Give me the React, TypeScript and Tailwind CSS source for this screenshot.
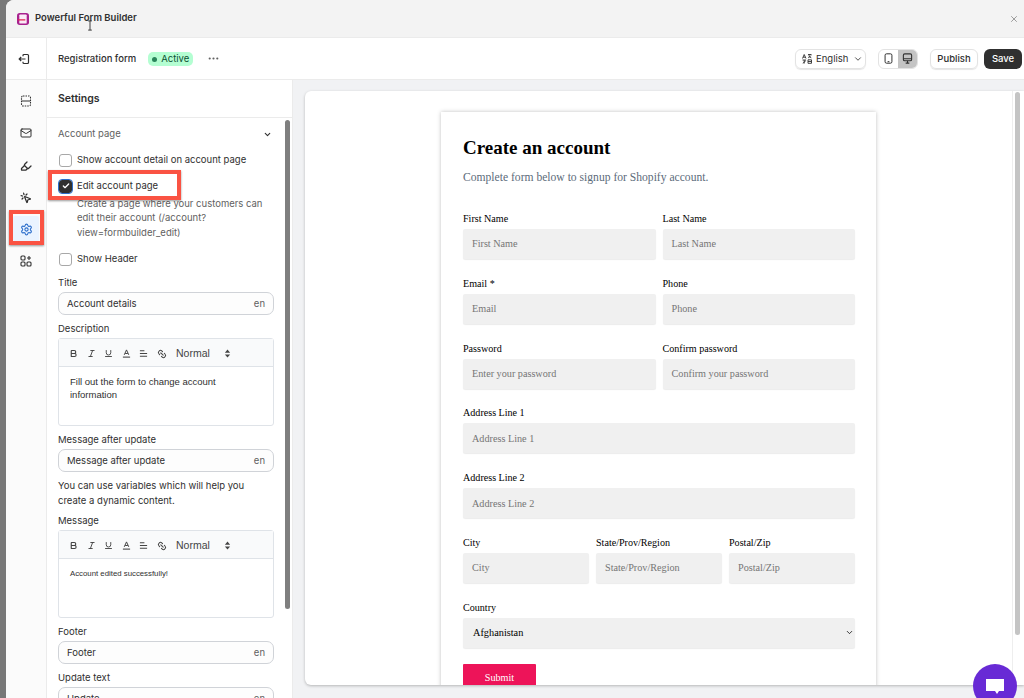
import React from 'react';
import { ChevronDown, Check, X, Settings, Ellipsis, Bold, Italic, Underline, Link2, Mail, Highlighter, MousePointerClick } from 'lucide-react';

function Checkbox({ checked, label }: { checked?: boolean; label: string }) {
  return (
    <label className="flex items-center gap-[5px] h-[26px] pt-[2px] pl-[1px] text-[9.5px] text-[#303030]">
      {checked ? (
        <span className="w-[13px] h-[13px] rounded-[3px] bg-[#303030] flex items-center justify-center outline outline-[1.5px] outline-[#2c6ecb]">
          <Check className="w-[8px] h-[8px] text-white" strokeWidth={4} />
        </span>
      ) : (
        <span className="w-[13px] h-[13px] rounded-[3px] border border-[#a8a8a8] bg-white" />
      )}
      <span>{label}</span>
    </label>
  );
}

function Label({ children }: { children: React.ReactNode }) {
  return <div className="h-[14px] pt-[1px] text-[9.5px] leading-[14px] text-[#303030] mb-[3px]">{children}</div>;
}

function TextField({ label, value }: { label: string; value: string }) {
  return (
    <div>
      <Label>{label}</Label>
      <div className="h-[23px] rounded-[7px] border border-[#d0d3d8] bg-[#fdfdfd] flex items-center justify-between pt-[1px] px-[8px] text-[9.5px] text-[#303030]">
        <span>{value}</span>
        <span className="text-[#616161]">en</span>
      </div>
    </div>
  );
}

function Editor({ children }: { children: React.ReactNode }) {
  return (
    <div className="h-[88px] rounded-[3px] border border-[#dfe3e8] flex flex-col">
      <div className="h-[28px] pt-[2px] bg-[#f9fafb] border-b border-[#dfe3e8] flex items-center pl-[10px] text-[#444444] gap-[8.5px]">
        <Bold className="w-[9px] h-[9px]" strokeWidth={3} />
        <Italic className="w-[9px] h-[9px]" strokeWidth={2.5} />
        <Underline className="w-[9px] h-[9px]" strokeWidth={2.5} />
        <svg viewBox="0 0 10 10" className="w-[9px] h-[9px]"><path d="M2.5 6.5l2.5-5.5 2.5 5.5M3.5 5h3" fill="none" stroke="currentColor" strokeWidth="1.1" /><path d="M1 9h8" stroke="currentColor" strokeWidth="1.2" /></svg>
        <svg viewBox="0 0 10 10" className="w-[9px] h-[9px]"><path d="M1 2h5M1 5h8M1 8h8" stroke="currentColor" strokeWidth="1.2" /></svg>
        <Link2 className="w-[10px] h-[10px] rotate-45" strokeWidth={2.5} />
        <span className="ml-[1px] w-[39px] text-[10.5px] font-['Liberation_Sans',sans-serif]">Normal</span>
        <svg viewBox="0 0 8 10" className="w-[7px] h-[9px]" fill="currentColor"><path d="M4 0.5L7 4H1zM4 9.5L1 6h6z" /></svg>
      </div>
      <div className="px-[11px] py-[8px] font-['Liberation_Sans',sans-serif] text-[#303030]">{children}</div>
    </div>
  );
}

function Field({ label, placeholder }: { label: string; placeholder: string }) {
  return (
    <div className="flex-1">
      <div className="text-[10.1px] leading-[12px] text-black mb-[4px]">{label}</div>
      <div className="h-[30px] rounded-[2px] bg-[#f0f0f0] shadow-[0_1px_1px_rgba(0,0,0,0.08)] flex items-center px-[9px] text-[10.2px] text-[#757575]">{placeholder}</div>
    </div>
  );
}

export default function App() {
  return (
    <div className="relative w-[1024px] h-[698px] overflow-hidden bg-[#787878] font-['Inter',sans-serif]">
      <div className="ml-[6px] h-full rounded-tl-[8px] overflow-hidden bg-white flex flex-col">
        {/* title bar */}
        <div className="h-[38px] shrink-0 bg-[#f3f3f3] border-b border-[#ebebeb] flex items-center pl-[11px] pr-[5px]">
          <svg viewBox="0 0 13 13" className="w-[12px] h-[12px]">
            <rect width="13" height="13" rx="3" fill="#a8218e" />
            <rect x="2.5" y="1.5" width="8" height="10" rx="1" fill="#fbeaf6" />
            <path d="M1 7.5h8" stroke="#e0204f" strokeWidth="1.4" />
          </svg>
          <span className="ml-[6px] text-[9.5px] font-semibold text-[#303030]">Powerful Form Builder</span>
          <X className="ml-auto w-[10px] h-[10px] text-[#8a8a8a]" strokeWidth={2} />
        </div>

        {/* toolbar */}
        <div className="h-[42px] shrink-0 bg-white border-b border-[#ebebeb] flex items-center">
          <div className="w-[41px] h-full border-r border-[#ebebeb] flex items-center justify-center pr-[4px]">
            <svg viewBox="0 0 12 12" className="w-[12px] h-[12px] text-[#303030]" fill="none" stroke="currentColor" strokeWidth="1.2">
              <path d="M5 3.2V2.5a1 1 0 0 1 1-1h3.5a1 1 0 0 1 1 1v7a1 1 0 0 1-1 1H6a1 1 0 0 1-1-1v-.7" />
              <path d="M7.5 6H1.2M3.2 4L1.2 6l2 2" />
            </svg>
          </div>
          <span className="ml-[11px] pt-[2px] text-[9.5px] font-medium text-[#303030]">Registration form</span>
          <span className="ml-[12px] h-[14px] pt-[1px] px-[4px] rounded-[5px] bg-[#b4fed2] flex items-center gap-[4px] text-[9.5px] text-[#0c5132]">
            <span className="w-[5px] h-[5px] rounded-full bg-[#29845a]" />
            Active
          </span>
          <Ellipsis className="ml-[14px] w-[13px] h-[13px] text-[#616161]" />
          <div className="ml-auto flex items-center pr-[2px]">
            <div className="w-[71px] h-[20px] pt-[1px] rounded-[6px] border border-[#e3e3e3] flex items-center pl-[6px] gap-[4px] text-[9.5px] text-[#303030] shadow-[0_1px_1px_rgba(0,0,0,0.1)]">
              <svg viewBox="0 0 10 10" className="w-[10px] h-[10px]" fill="none" stroke="currentColor" strokeWidth="0.9">
                <path d="M0.5 4.5L2.2 0.5 4 4.5M1.1 3.2h2.2M6 0.5h3.5M7.7 0.5v1.2M6.2 3.8C7.5 3.2 8.5 2.4 9 1.6M9.3 3.8C8 3.3 7 2.5 6.5 1.6M0.5 6h3.5M2.2 6v3.5M0.8 9.2C2 8.6 3 7.8 3.6 6.6M6 5.8h3.5v3.5H6zM6 7.5h3.5" />
              </svg>
              English
              <ChevronDown className="w-[10px] h-[10px] ml-[1px]" />
            </div>
            <div className="ml-[12px] w-[40px] h-[20px] rounded-[6px] border border-[#e3e3e3] overflow-hidden flex">
              <span className="flex-1 flex items-center justify-center">
                <svg viewBox="0 0 10 12" className="w-[9px] h-[11px] text-[#303030]" fill="none" stroke="currentColor" strokeWidth="1.1"><rect x="1.2" y="0.8" width="7.6" height="10.4" rx="1.6" /><path d="M4 9.5h2" /></svg>
              </span>
              <span className="flex-1 bg-[#c4c4c4] flex items-center justify-center">
                <svg viewBox="0 0 12 12" className="w-[11px] h-[11px] text-[#303030]" fill="none" stroke="currentColor" strokeWidth="1.2"><rect x="1.5" y="1" width="9" height="7.5" rx="1.5" /><path d="M1.5 6.2h9M4 11h4M6 8.5V11" /></svg>
              </span>
            </div>
            <div className="ml-[12px] w-[48px] h-[20px] pt-[2px] rounded-[6px] border border-[#e3e3e3] flex items-center justify-center text-[9.5px] font-medium text-[#303030] shadow-[0_1px_1px_rgba(0,0,0,0.1)]">Publish</div>
            <div className="ml-[6px] w-[38px] h-[20px] pt-[2px] rounded-[6px] bg-[#303030] flex items-center justify-center text-[9.5px] font-medium text-white">Save</div>
          </div>
        </div>

        <div className="flex-1 flex min-h-0">
          {/* icon rail */}
          <div className="w-[41px] shrink-0 bg-[#fbfbfb] border-r border-[#ebebeb] flex flex-col items-center pt-[10px] gap-[11px] text-[#303030]">
            <span className="w-[21px] h-[21px] flex items-center justify-center">
              <svg viewBox="0 0 12 12" className="w-[12px] h-[12px]" fill="none" stroke="currentColor" strokeWidth="1.1"><rect x="1.5" y="1" width="9" height="10" rx="1.5" strokeDasharray="1.5 1" /><path d="M1.5 6h9" /></svg>
            </span>
            <span className="w-[21px] h-[21px] flex items-center justify-center"><Mail className="w-[12px] h-[12px]" /></span>
            <span className="w-[21px] h-[21px] mt-[1px] flex items-center justify-center"><Highlighter className="w-[12px] h-[12px]" strokeWidth={2.5} /></span>
            <span className="w-[21px] h-[21px] flex items-center justify-center"><MousePointerClick className="w-[12px] h-[12px]" strokeWidth={2.5} /></span>
            <span className="w-[26px] h-[26px] -my-[3px] rounded-[2px] bg-[#eaf3ff] flex items-center justify-center"><Settings className="w-[13px] h-[13px] text-[#2c6ecb]" /></span>
            <span className="w-[21px] h-[21px] flex items-center justify-center">
              <svg viewBox="0 0 12 12" className="w-[12px] h-[12px]" fill="none" stroke="currentColor" strokeWidth="1.1"><rect x="1" y="1" width="4" height="4" rx="1" /><rect x="1" y="7" width="4" height="4" rx="1" /><rect x="7" y="7" width="4" height="4" rx="1" /><path d="M9 1v4M7 3h4" /></svg>
            </span>
          </div>

          {/* settings panel */}
          <div className="relative w-[246px] shrink-0 bg-white border-r border-[#ebebeb] flex flex-col">
            <div className="h-[38px] shrink-0 border-b border-[#ebebeb] flex items-center pl-[11px] text-[10.5px] font-semibold text-[#303030]">Settings</div>
            <div className="flex-1 overflow-hidden pl-[11px] pr-[18px] pt-[8px] bg-white">
              <div className="h-[14px] pt-[2px] flex items-center justify-between text-[9.5px] text-[#616161] pr-[2px]">
                Account page
                <ChevronDown className="w-[9px] h-[9px] text-[#303030]" strokeWidth={3} />
              </div>
              <div className="mt-[6px]"><Checkbox label="Show account detail on account page" /></div>
              <Checkbox checked label="Edit account page" />
              <div className="pl-[19px] -mt-[1.5px] text-[9.5px] leading-[14.5px] text-[#616161]">Create a page where your customers can edit their account (/account?view=formbuilder_edit)</div>
              <div className="mt-[5px]"><Checkbox label="Show Header" /></div>
              <div className="mt-[4px]"><TextField label="Title" value="Account details" /></div>
              <div className="mt-[6px]">
                <Label>Description</Label>
                <Editor><p className="text-[9.5px] leading-[13px]">Fill out the form to change account information</p></Editor>
              </div>
              <div className="mt-[6px]"><TextField label="Message after update" value="Message after update" /></div>
              <div className="mt-[7px] text-[9.5px] leading-[14.5px] text-[#303030]">You can use variables which will help you create a dynamic content.</div>
              <div className="mt-[5px]">
                <Label>Message</Label>
                <Editor><p className="mt-[1px] text-[7.8px] leading-[11px]">Account edited successfully!</p></Editor>
              </div>
              <div className="mt-[6px]"><TextField label="Footer" value="Footer" /></div>
              <div className="mt-[6px]"><TextField label="Update text" value="Update" /></div>
            </div>
            {/* scrollbar */}
            <div className="absolute right-[2px] top-[40px] w-[5px] h-[489px] rounded-full bg-[#7f7f7f]" />
          </div>

          {/* preview */}
          <div className="flex-1 min-w-0 bg-[#f1f2f4] pl-[12px] pt-[11px] pb-[13px]">
            <div className="relative h-full rounded-l-[6px] bg-white shadow-[0_1px_3px_rgba(0,0,0,0.25)] overflow-hidden flex justify-center pr-[12px]">
              <div className="w-[435px] mt-[21px] pt-[24px] pl-[22px] pr-[21px] h-[700px] bg-white shadow-[0_0_4px_rgba(0,0,0,0.25)] font-['Liberation_Serif',serif] shrink-0">
                <h1 className="text-[19px] leading-[24px] font-bold text-black">Create an account</h1>
                <p className="mt-[10px] text-[11.6px] leading-[16px] text-[#5c6b7a]">Complete form below to signup for Shopify account.</p>
                <div className="mt-[27px] flex flex-col gap-[18.8px]">
                  <div className="flex gap-[7px]"><Field label="First Name" placeholder="First Name" /><Field label="Last Name" placeholder="Last Name" /></div>
                  <div className="flex gap-[7px]"><Field label="Email *" placeholder="Email" /><Field label="Phone" placeholder="Phone" /></div>
                  <div className="flex gap-[7px]"><Field label="Password" placeholder="Enter your password" /><Field label="Confirm password" placeholder="Confirm your password" /></div>
                  <Field label="Address Line 1" placeholder="Address Line 1" />
                  <Field label="Address Line 2" placeholder="Address Line 2" />
                  <div className="flex gap-[7px]"><Field label="City" placeholder="City" /><Field label="State/Prov/Region" placeholder="State/Prov/Region" /><Field label="Postal/Zip" placeholder="Postal/Zip" /></div>
                  <div>
                    <div className="text-[10.1px] leading-[12px] text-black mb-[4px]">Country</div>
                    <div className="h-[30px] rounded-[2px] bg-[#f0f0f0] shadow-[0_1px_1px_rgba(0,0,0,0.08)] flex items-center justify-between pl-[10px] pr-[1px] text-[10.3px] text-black">
                      Afghanistan
                      <ChevronDown className="w-[9px] h-[9px]" />
                    </div>
                  </div>
                </div>
                <div className="mt-[16px] w-[73px] h-[27px] rounded-[1px] bg-[#ed1459] flex items-center justify-center text-[10.2px] text-white">Submit</div>
              </div>
              <div className="absolute right-0 top-0 bottom-0 w-[12px] border-l border-[#eeeeee] bg-white" />
              <div className="absolute right-[4px] top-[1px] w-[5px] h-[543px] rounded-full bg-[#c4c4c4]" />
            </div>
          </div>
        </div>
      </div>

      {/* annotation boxes */}
      <div className="absolute left-[48px] top-[170px] w-[133px] h-[30px] border-[4px] border-[#fa5343] shadow-[0_1px_2px_rgba(0,0,0,0.4)]" />
      <div className="absolute left-[9px] top-[210px] w-[35px] h-[35px] border-[4px] border-[#fa5343] shadow-[0_1px_2px_rgba(0,0,0,0.4)]" />

      {/* text cursor over the title bar */}
      <svg viewBox="0 0 8 12" className="absolute left-[86px] top-[20px] w-[8px] h-[11px] text-[#303030]" fill="none" stroke="currentColor" strokeWidth="1"><path d="M2 1h4M2 11h4M4 1v10" /></svg>

      {/* chat bubble */}
      <div className="absolute left-[973px] top-[664px] w-[44px] h-[44px] rounded-full bg-[#682ad5] flex items-center justify-center">
        <svg viewBox="0 0 24 24" className="w-[24px] h-[24px] text-white" fill="currentColor"><path d="M3 5h18v12h-5l-2 3-2-3H3z" /></svg>
      </div>
    </div>
  );
}
